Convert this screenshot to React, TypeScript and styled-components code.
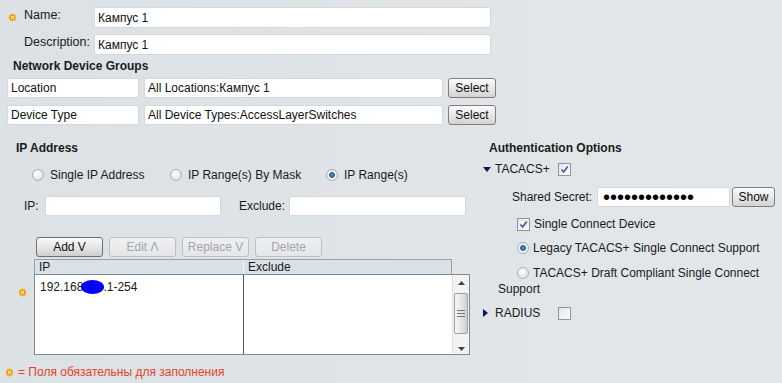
import React from 'react';
import styled, { createGlobalStyle } from 'styled-components';

const GlobalStyle = createGlobalStyle`
  html, body {
    margin: 0;
    padding: 0;
    background: #dfe4e8;
  }
  body {
    font-family: "Liberation Sans", Arial, sans-serif;
    font-size: 12px;
    color: #1a1a1a;
  }
`;

const Page = styled.div`
  width: 782px;
  height: 383px;
  box-sizing: border-box;
  padding-top: 7px;
  overflow: hidden;
  background: linear-gradient(to right, #dce1e5, #e3e7ea);
`;

const FieldRow = styled.div`
  display: grid;
  grid-template-columns: 16px 70px 397px;
  align-items: start;
  padding-left: 8px;
  & + & {
    margin-top: 6px;
  }
`;

const StarCell = styled.div`
  padding-top: 6px;
  line-height: 0;
`;

const Label = styled.div`
  padding-top: 1px;
  line-height: 14px;
  font-size: 12.5px;
  white-space: nowrap;
`;

const TextInput = styled.input<{ $w: number; $h?: number }>`
  box-sizing: border-box;
  width: ${(p) => p.$w}px;
  height: ${(p) => p.$h ?? 20}px;
  margin: 0;
  padding: 0 3px;
  border: 1px solid #d3d8dc;
  border-radius: 2px;
  background: #fff;
  font-family: "Liberation Sans", Arial, sans-serif;
  font-size: 12px;
  color: #111;
  outline: none;
`;

const SecretInput = styled(TextInput)`
  padding: 0 0 0 5px;
  font-size: 20px;
  line-height: 18px;
  color: #000;
`;

const GroupTitle = styled.div<{ $left: number; $top: number }>`
  margin-top: ${(p) => p.$top}px;
  padding-left: ${(p) => p.$left}px;
  font-weight: bold;
  line-height: 14px;
  color: #1b1b1b;
`;

const NdgRow = styled.div`
  display: flex;
  gap: 5px;
  padding-left: 7px;
  margin-top: 5px;
  & + & {
    margin-top: 7px;
  }
`;

const PlainButton = styled.button<{ $w: number }>`
  box-sizing: border-box;
  width: ${(p) => p.$w}px;
  height: 20px;
  margin: 0;
  padding: 0;
  border: 1px solid #7f7f7f;
  border-radius: 3px;
  background: linear-gradient(#fbfbfb, #e6e6e6 55%, #d2d2d2);
  font-family: "Liberation Sans", Arial, sans-serif;
  font-size: 12px;
  color: #111;
`;

const Lower = styled.div`
  display: grid;
  grid-template-columns: 478px 1fr;
  margin-top: 16px;
`;

const LeftPanel = styled.div`
  display: flex;
  flex-direction: column;
`;

const RadioRow = styled.div`
  display: grid;
  grid-template-columns: 138px 156px auto;
  margin-top: 12px;
  padding-left: 32px;
  height: 16px;
  align-items: center;
`;

const Choice = styled.label<{ $gap: number }>`
  display: flex;
  align-items: center;
  gap: ${(p) => p.$gap}px;
  white-space: nowrap;
`;

const RadioDot = styled.span<{ $on?: boolean }>`
  box-sizing: border-box;
  display: inline-block;
  width: 12px;
  height: 12px;
  border-radius: 50%;
  border: 1px solid #aab0b5;
  background: ${(p) =>
    p.$on
      ? 'radial-gradient(circle at 50% 50%, #5f9fd6 0, #1c5a94 2.5px, #f4f6f7 3.2px, #dde1e4 100%)'
      : 'radial-gradient(circle at 40% 35%, #ffffff 0, #eceef0 45%, #cfd3d6 100%)'};
  flex-shrink: 0;
`;

const IpRow = styled.div`
  display: grid;
  grid-template-columns: 21px 176px 18px 50px 177px;
  align-items: center;
  margin-top: 13px;
  padding-left: 24px;
`;

const ActionRow = styled.div`
  display: flex;
  gap: 6px;
  margin-top: 21px;
  padding-left: 36px;
`;

const ActionButton = styled.button<{ $off?: boolean }>`
  box-sizing: border-box;
  width: 67px;
  height: 20px;
  margin: 0;
  padding: 0;
  border-radius: 3px;
  border: 1px solid ${(p) => (p.$off ? '#bcc0c3' : '#6e6e6e')};
  background: ${(p) =>
    p.$off ? 'linear-gradient(#eef0f1, #e4e7e9)' : 'linear-gradient(#fafafa, #e4e4e4 55%, #cfcfcf)'};
  color: ${(p) => (p.$off ? '#a3a6a8' : '#111')};
  font-family: "Liberation Sans", Arial, sans-serif;
  font-size: 12px;
`;

const TableRow = styled.div`
  display: grid;
  grid-template-columns: 34px 436px;
  margin-top: 2px;
`;

const TableStar = styled.div`
  padding: 29px 0 0 18px;
  line-height: 0;
`;

const Table = styled.div`
  display: flex;
  flex-direction: column;
`;

const HeaderRow = styled.div`
  box-sizing: border-box;
  display: grid;
  grid-template-columns: 208px 1fr;
  width: 418px;
  height: 15px;
  border: 1px solid #93a0a8;
  border-bottom: none;
  background: #d8e1e7;
  line-height: 14px;
`;

const HeadCell = styled.div<{ $sep?: boolean }>`
  padding-left: 4px;
  border-left: ${(p) => (p.$sep ? '1px solid #f4f7f9' : 'none')};
`;

const Body = styled.div`
  box-sizing: border-box;
  display: grid;
  grid-template-columns: 208px 209px 1fr;
  height: 81px;
  border: 1px solid #7d8b94;
  background: #fff;
`;

const Cell = styled.div<{ $sep?: boolean }>`
  padding: 5px 0 0 5px;
  line-height: 14px;
  border-left: ${(p) => (p.$sep ? '1px solid #555' : 'none')};
  white-space: nowrap;
`;

const Blot = styled.span`
  display: inline-block;
  width: 23px;
  height: 14px;
  margin: 0 -1px 0 -2px;
  border-radius: 50%;
  background: #0000ff;
  vertical-align: -3px;
`;

const ScrollBar = styled.div`
  display: flex;
  flex-direction: column;
  align-items: center;
  background: #f2f2f2;
  border-left: 1px solid #e2e2e2;
`;

const Arrow = styled.div<{ $down?: boolean }>`
  height: 15px;
  display: flex;
  align-items: ${(p) => (p.$down ? 'flex-end' : 'center')};
  padding-bottom: ${(p) => (p.$down ? '3px' : '0')};
  line-height: 0;
`;

const Thumb = styled.div`
  box-sizing: border-box;
  width: 14px;
  height: 41px;
  margin-top: 3px;
  border: 1px solid #9da1a4;
  border-radius: 2px;
  background: linear-gradient(to right, #f6f6f6, #e2e2e2 60%, #cfcfcf);
  display: flex;
  align-items: center;
  justify-content: center;
`;

const Spacer = styled.div`
  flex: 1;
`;

const Footer = styled.div`
  display: flex;
  align-items: center;
  gap: 4px;
  margin-top: 10px;
  padding-left: 5px;
  color: #e3432a;
  line-height: 14px;
`;

const RightPanel = styled.div`
  display: flex;
  flex-direction: column;
`;

const ToggleRow = styled.div<{ $top: number }>`
  display: grid;
  grid-template-columns: 12px 63px 13px;
  align-items: center;
  height: 14px;
  margin-top: ${(p) => p.$top}px;
  padding-left: 5px;
`;

const SecretRow = styled.div`
  display: grid;
  grid-template-columns: 83px 133px 43px;
  gap: 2px;
  align-items: center;
  margin-top: 11px;
  padding-left: 34px;
`;

const OptionRow = styled.label<{ $top: number }>`
  display: flex;
  align-items: center;
  gap: 4px;
  height: 14px;
  margin-top: ${(p) => p.$top}px;
  padding-left: 39px;
  white-space: nowrap;
`;

const WrapOption = styled.div`
  width: 272px;
  margin: 10px 0 0 20px;
  text-indent: 19px;
  line-height: 16px;
`;

const InlineRadio = styled(RadioDot)`
  vertical-align: -2px;
  margin-right: 4px;
  text-indent: 0;
`;

const Box = styled.span`
  box-sizing: border-box;
  display: inline-flex;
  align-items: center;
  justify-content: center;
  width: 13px;
  height: 13px;
  border: 1px solid #8f9498;
  background: linear-gradient(135deg, #e4e6e8, #fbfbfb);
`;

const Star = () => (
  <svg width="9" height="9" viewBox="0 0 10 10">
    <path
      d="M10 5L7.77 6.15 8.54 8.54 6.15 7.77 5 10 3.85 7.77 1.46 8.54 2.23 6.15 0 5 2.23 3.85 1.46 1.46 3.85 2.23 5 0 6.15 2.23 8.54 1.46 7.77 3.85Z"
      fill="#f08a00"
    />
    <circle cx="5" cy="5" r="2.2" fill="#ffd84a" />
  </svg>
);

const Check = ({ on }: { on?: boolean }) => (
  <Box>
    {on && (
      <svg width="9" height="9" viewBox="0 0 9 9">
        <path d="M1.5 4.5L3.6 7 7.8 1.5" fill="none" stroke="#3f5aa6" strokeWidth="1.6" />
      </svg>
    )}
  </Box>
);

const Caret = ({ open }: { open?: boolean }) =>
  open ? (
    <svg width="8" height="5" viewBox="0 0 8 5">
      <path d="M0 0H8L4 5Z" fill="#121466" />
    </svg>
  ) : (
    <svg width="5" height="8" viewBox="0 0 5 8">
      <path d="M0 0V8L5 4Z" fill="#121466" />
    </svg>
  );

const ScrollArrow = ({ down }: { down?: boolean }) => (
  <svg width="7" height="4" viewBox="0 0 7 4">
    <path d={down ? 'M0 0H7L3.5 4Z' : 'M0 4H7L3.5 0Z'} fill="#444" />
  </svg>
);

const Grip = () => (
  <svg width="8" height="7" viewBox="0 0 8 7">
    <path d="M0 0.5H8M0 3.5H8M0 6.5H8" stroke="#777" strokeWidth="1" />
  </svg>
);

export default function App() {
  return (
    <Page>
      <GlobalStyle />
      <FieldRow>
        <StarCell>
          <Star />
        </StarCell>
        <Label>Name:</Label>
        <TextInput $w={397} $h={21} defaultValue="Кампус 1" />
      </FieldRow>
      <FieldRow>
        <span />
        <Label>Description:</Label>
        <TextInput $w={397} $h={21} defaultValue="Кампус 1" />
      </FieldRow>

      <GroupTitle $left={13} $top={4}>Network Device Groups</GroupTitle>
      <NdgRow>
        <TextInput $w={132} defaultValue="Location" />
        <TextInput $w={299} defaultValue="All Locations:Кампус 1" />
        <PlainButton $w={48}>Select</PlainButton>
      </NdgRow>
      <NdgRow>
        <TextInput $w={132} defaultValue="Device Type" />
        <TextInput $w={299} defaultValue="All Device Types:AccessLayerSwitches" />
        <PlainButton $w={48}>Select</PlainButton>
      </NdgRow>

      <Lower>
        <LeftPanel>
          <GroupTitle $left={16} $top={0}>IP Address</GroupTitle>
          <RadioRow>
            <Choice $gap={6}>
              <RadioDot />
              Single IP Address
            </Choice>
            <Choice $gap={6}>
              <RadioDot />
              IP Range(s) By Mask
            </Choice>
            <Choice $gap={6}>
              <RadioDot $on />
              IP Range(s)
            </Choice>
          </RadioRow>
          <IpRow>
            <span>IP:</span>
            <TextInput $w={176} />
            <span />
            <span>Exclude:</span>
            <TextInput $w={177} />
          </IpRow>
          <ActionRow>
            <ActionButton>Add V</ActionButton>
            <ActionButton $off>Edit Λ</ActionButton>
            <ActionButton $off>Replace V</ActionButton>
            <ActionButton $off>Delete</ActionButton>
          </ActionRow>
          <TableRow>
            <TableStar>
              <Star />
            </TableStar>
            <Table>
              <HeaderRow>
                <HeadCell>IP</HeadCell>
                <HeadCell $sep>Exclude</HeadCell>
              </HeaderRow>
              <Body>
                <Cell>
                  192.168
                  <Blot />
                  .1-254
                </Cell>
                <Cell $sep />
                <ScrollBar>
                  <Arrow>
                    <ScrollArrow />
                  </Arrow>
                  <Thumb>
                    <Grip />
                  </Thumb>
                  <Spacer />
                  <Arrow $down>
                    <ScrollArrow down />
                  </Arrow>
                </ScrollBar>
              </Body>
            </Table>
          </TableRow>
          <Footer>
            <Star />
            <span>= Поля обязательны для заполнения</span>
          </Footer>
        </LeftPanel>

        <RightPanel>
          <GroupTitle $left={11} $top={0}>Authentication Options</GroupTitle>
          <ToggleRow $top={7}>
            <Caret open />
            <span>TACACS+</span>
            <Check on />
          </ToggleRow>
          <SecretRow>
            <span>Shared Secret:</span>
            <SecretInput $w={133} type="password" defaultValue="sharedsecret1" />
            <PlainButton $w={43}>Show</PlainButton>
          </SecretRow>
          <OptionRow $top={10}>
            <Check on />
            Single Connect Device
          </OptionRow>
          <OptionRow $top={10}>
            <RadioDot $on />
            Legacy TACACS+ Single Connect Support
          </OptionRow>
          <WrapOption>
            <InlineRadio />
            TACACS+ Draft Compliant Single Connect Support
          </WrapOption>
          <ToggleRow $top={9}>
            <Caret />
            <span>RADIUS</span>
            <Check />
          </ToggleRow>
        </RightPanel>
      </Lower>
    </Page>
  );
}
